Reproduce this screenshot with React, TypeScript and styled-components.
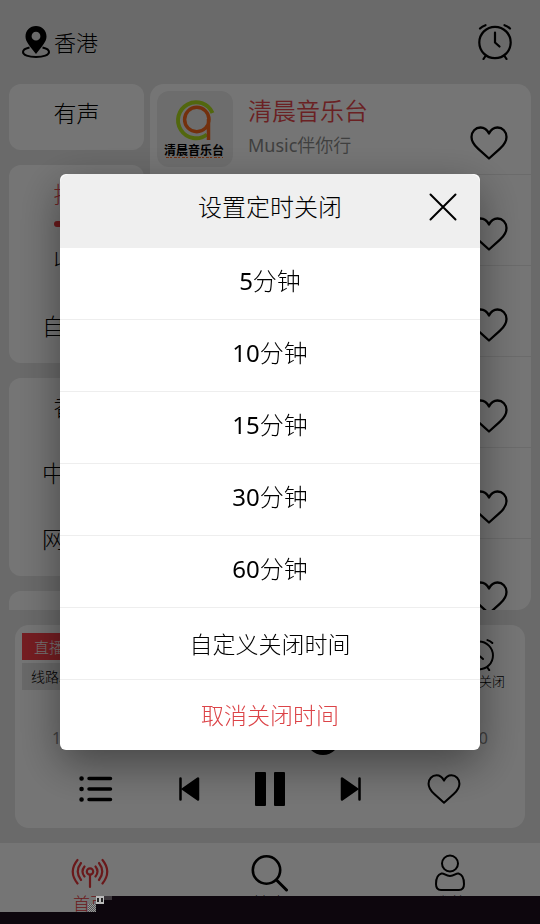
import React from "react";
import styled, { createGlobalStyle, css } from "styled-components";

const GlobalStyle = createGlobalStyle`
  * { box-sizing: border-box; }
  body {
    margin: 0;
    background: #e7e7e7;
    color: #000;
    font-family: "Noto Sans", "Noto Sans CJK SC", sans-serif;
    font-weight: 300;
  }
  button, input { font: inherit; color: inherit; }
  button { border: 0; padding: 0; background: none; cursor: pointer; }
  svg { display: block; }
`;

const Page = styled.div`
  display: flex;
  flex-direction: column;
  height: 100vh;
  overflow: hidden;
`;

const Header = styled.header`
  display: flex;
  flex: none;
  justify-content: space-between;
  align-items: center;
  height: 84px;
  padding: 0 27px 0 21px;
`;

const City = styled.button`
  display: flex;
  align-items: center;
  gap: 3px;
  font-size: 22px;
  line-height: 30px;
`;

const IconButton = styled.button`
  display: grid;
  place-items: center;
  flex: none;
`;

const Main = styled.main`
  display: flex;
  flex: 1 1 0;
  gap: 6px;
  min-height: 0;
  overflow: hidden;
  padding: 0 9px;
`;

const Categories = styled.nav`
  display: flex;
  flex: none;
  flex-direction: column;
  gap: 15px;
  width: 135px;
`;

const Group = styled.div`
  flex: none;
  min-height: 66px;
  overflow: hidden;
  border-radius: 12px;
  background: #fff;
`;

const Category = styled.button<{ $active?: boolean }>`
  display: flex;
  flex-direction: column;
  align-items: center;
  width: 100%;
  height: 66px;
  padding-top: 13px;
  font-size: 23px;
  line-height: 32px;
  color: ${(p) => (p.$active ? "#e8484c" : "#000")};
  ${(p) =>
    p.$active &&
    css`
      &::after {
        content: "";
        width: 46px;
        height: 6px;
        margin-top: 11px;
        border-radius: 3px;
        background: #e8383c;
      }
    `}
`;

const Stations = styled.ul`
  flex: 1;
  min-width: 0;
  margin: 0;
  padding: 0;
  overflow: hidden;
  list-style: none;
  border-radius: 14px;
  background: #fff;
`;

const Station = styled.li`
  display: flex;
  align-items: center;
  gap: 15px;
  height: 91px;
  padding: 0 23px 0 7px;
  border-bottom: 1px solid #e9e9e9;
`;

const Cover = styled.div`
  flex: none;
  width: 76px;
  height: 76px;
  overflow: hidden;
  border-radius: 12px;
  background: #eee;
`;

const StationText = styled.div`
  flex: 1;
  min-width: 0;
  padding-bottom: 7px;
  font-size: 18px;
  font-weight: 350;
  line-height: 24px;
  color: #8a8a8a;
`;

const StationName = styled.div`
  margin-bottom: 6px;
  font-size: 24px;
  line-height: 32px;
  color: #e8484c;
`;

const Latin = styled.span`
  font-weight: 400;
`;

const Like = styled(IconButton)`
  padding-top: 28px;
`;

const Player = styled.section`
  flex: none;
  margin: 15px;
  padding: 8px 7px 21px;
  border-radius: 14px;
  background: #fff;
`;

const PlayerTop = styled.div`
  display: flex;
  justify-content: space-between;
  height: 88px;
`;

const Tags = styled.div`
  display: grid;
  align-content: start;
  gap: 3px;
`;

const Tag = styled.button<{ $live?: boolean }>`
  width: 54px;
  height: 27px;
  font-size: ${(p) => (p.$live ? "15px" : "14px")};
  line-height: 26px;
  color: ${(p) => (p.$live ? "#fff" : "#000")};
  background: ${(p) => (p.$live ? "#ff404a" : "#e4e4e4")};
`;

const TimerButton = styled.button`
  display: flex;
  flex-direction: column;
  align-items: center;
  padding: 6px 13px 0 0;
  font-size: 13px;
  line-height: 20px;
`;

const Progress = styled.div`
  display: flex;
  align-items: center;
  gap: 12px;
  height: 34px;
  padding: 0 30px;
  font-size: 16px;
  font-weight: 400;
  color: #8a8a8a;
`;

const Seek = styled.input`
  flex: 1;
  min-width: 0;
  height: 4px;
  margin: 0;
  appearance: none;
  background: #ccc;
  &::-webkit-slider-thumb {
    appearance: none;
    width: 34px;
    height: 34px;
    border-radius: 50%;
    background: #000;
  }
`;

const Controls = styled.div`
  display: flex;
  justify-content: space-between;
  align-items: center;
  height: 36px;
  margin-top: 16px;
  padding: 0 57px;
`;

const Transport = styled.div`
  display: flex;
  align-items: center;
  gap: 55px;
`;

const TabBar = styled.nav`
  display: grid;
  flex: none;
  grid-template-columns: repeat(3, 1fr);
  height: 81px;
  background: #fff;
`;

const Tab = styled.a<{ $active?: boolean }>`
  display: flex;
  flex-direction: column;
  align-items: center;
  padding-top: 11px;
  font-size: 17px;
  line-height: 24px;
  text-decoration: none;
  color: ${(p) => (p.$active ? "#e8383c" : "#000")};
`;

const Backdrop = styled.div`
  position: fixed;
  inset: 0;
  display: grid;
  align-items: center;
  padding: 0 60px;
  background: rgba(0, 0, 0, 0.54);
`;

const Dialog = styled.div`
  overflow: hidden;
  border-radius: 6px;
  background: #fff;
  box-shadow: 0 14px 44px rgba(0, 0, 0, 0.42);
`;

const DialogHeader = styled.div`
  display: grid;
  grid-template-columns: 1fr auto 1fr;
  align-items: center;
  height: 74px;
  padding: 0 23px 8px;
  border-radius: 9px 9px 0 0;
  background: #efefef;
`;

const DialogTitle = styled.h2`
  grid-column: 2;
  margin: 0;
  font-size: 24px;
  font-weight: 300;
  line-height: 32px;
`;

const Close = styled(IconButton)`
  justify-self: end;
`;

const Option = styled.button<{ $kind?: "custom" | "cancel" }>`
  display: block;
  width: 100%;
  height: 72px;
  padding-bottom: ${(p) => (p.$kind ? "0" : "5px")};
  border-bottom: 1px solid #eee;
  font-size: ${(p) => (p.$kind ? "23px" : "24px")};
  line-height: 32px;
  color: ${(p) => (p.$kind === "cancel" ? "#dc4448" : "#000")};
  &:last-child {
    height: 70px;
    border-bottom: 0;
  }
`;

const Glitch = styled.div`
  position: fixed;
  right: 0;
  bottom: 0;
  left: 0;
  display: flex;
  align-items: flex-end;
  pointer-events: none;
`;

const GlitchBar = styled.div<{ $low?: boolean }>`
  flex: ${(p) => (p.$low ? "0 0 96px" : "1")};
  height: ${(p) => (p.$low ? "12px" : "28px")};
  background: #0d060d;
`;

const GlitchNoise = styled.svg`
  position: absolute;
  left: 88px;
  bottom: 12px;
`;

const Heart = ({ width = 38, height = 34 }: { width?: number; height?: number }) => (
  <svg width={width} height={height} viewBox="0 0 38 34" fill="none" stroke="#000" strokeWidth="2.3" strokeLinejoin="round">
    <path d="M19 7.500C17 3.500 13.800 1.500 10.500 1.500C5.500 1.500 1.500 5.500 1.500 11C1.500 16 4 19 8 22.700L19 32.500L30 22.700C34 19 36.500 16 36.500 11C36.500 5.500 32.500 1.500 27.500 1.500C24.200 1.500 21 3.500 19 7.500Z" />
  </svg>
);

const Alarm = ({ size = 36 }: { size?: number }) => (
  <svg width={size} height={size} viewBox="0 0 36 36" fill="none" stroke="#000" strokeWidth="2.2" strokeLinecap="round" strokeLinejoin="round">
    <circle cx="18" cy="18.500" r="15.700" />
    <path d="M18 8.500V18.500L22.500 22.500M3 4.500C4.500 3 6 2 8.500 1.200M33 4.500C31.500 3 30 2 27.500 1.200M8.500 32L6.500 35M27.500 32L29.500 35" />
  </svg>
);

const Pin = () => (
  <svg width="30" height="34" viewBox="0 0 30 34">
    <path fill="#000" fillRule="evenodd" d="M15 1C9 1 4.500 5.500 4.500 11.500C4.500 17 9 21 15 29C21 21 25.500 17 25.500 11.500C25.500 5.500 21 1 15 1ZM15 6.800A4.400 4.400 0 1 1 15 15.600A4.400 4.400 0 1 1 15 6.800Z" />
    <path fill="none" stroke="#000" strokeWidth="2" d="M8.500 22.500C4.500 23.300 2 25 2 27C2 30 7.500 32 15 32S28 30 28 27C28 25 25.500 23.300 21.500 22.500" />
  </svg>
);

const Skip = ({ next = false }: { next?: boolean }) => (
  <svg width="22" height="26" viewBox="0 0 22 26" fill="#000" stroke="#000" strokeLinecap="round" strokeLinejoin="round">
    {next ? (
      <path d="M2 2.500V23.500L17 13ZM19.500 2.500V23.500" strokeWidth="2.500" />
    ) : (
      <path d="M20 2.500V23.500L5 13ZM2.500 2.500V23.500" strokeWidth="2.500" />
    )}
  </svg>
);

const StationLogo = () => (
  <svg width="76" height="76" viewBox="0 0 76 76">
    <path fill="none" stroke="#b2e020" strokeWidth="4" d="M55.500 22A18 18 0 1 0 50 43.500" />
    <path fill="none" stroke="#fa6a1e" strokeWidth="3.500" d="M51.500 28V49M52 28.500A12.200 12.200 0 1 1 27.600 28.500A12.200 12.200 0 1 1 52 28.500Z" />
    <text x="37" y="64" textAnchor="middle" fontSize="12" fontWeight="700" fontFamily="Noto Sans CJK SC, sans-serif" fill="#000">清晨音乐台</text>
    <path stroke="#fa6a1e" strokeWidth="1" strokeDasharray="3 1 2 2" d="M9 66.500H66" />
  </svg>
);

const groups = [
  { id: "audio", names: ["有声"] },
  { id: "mine", names: ["推荐", "收藏", "自定义"] },
  { id: "region", names: ["香港", "中央台", "网络台"] },
  { id: "more", names: [] as string[] },
];
const minutes = [5, 10, 15, 30, 60];

export default function App() {
  return (
    <>
      <GlobalStyle />
      <Page>
        <Header>
          <City><Pin />香港</City>
          <IconButton aria-label="定时"><Alarm /></IconButton>
        </Header>
        <Main>
          <Categories>
            {groups.map((group) => (
              <Group key={group.id}>
                {group.names.map((name) => (
                  <Category key={name} $active={name === "推荐"}>{name}</Category>
                ))}
              </Group>
            ))}
          </Categories>
          <Stations>
            {[0, 1, 2, 3, 4, 5].map((i) => (
              <Station key={i}>
                {i === 0 ? (
                  <>
                    <Cover><StationLogo /></Cover>
                    <StationText>
                      <StationName>清晨音乐台</StationName>
                      <Latin>Music</Latin>伴你行
                    </StationText>
                  </>
                ) : (
                  <StationText />
                )}
                <Like aria-label="喜欢"><Heart /></Like>
              </Station>
            ))}
          </Stations>
        </Main>
        <Player>
          <PlayerTop>
            <Tags>
              <Tag $live>直播</Tag>
              <Tag>线路2</Tag>
            </Tags>
            <TimerButton><Alarm size={32} />定时关闭</TimerButton>
          </PlayerTop>
          <Progress>
            <span>10:00</span>
            <Seek type="range" aria-label="进度" defaultValue="68" />
            <span>12:00</span>
          </Progress>
          <Controls>
            <IconButton aria-label="列表">
              <svg width="34" height="28" viewBox="0 0 34 28" fill="none" stroke="#000" strokeLinecap="round">
                <path strokeWidth="3.500" d="M10 3.500H31.500M10 14H31.500M10 24.500H31.500" />
                <path strokeWidth="4.500" d="M2.500 3.500H2.600M2.500 14H2.600M2.500 24.500H2.600" />
              </svg>
            </IconButton>
            <Transport>
              <IconButton aria-label="上一个"><Skip /></IconButton>
              <IconButton aria-label="暂停">
                <svg width="30" height="36" viewBox="0 0 30 36">
                  <rect x="0" y="1" width="11" height="34" rx="1" />
                  <rect x="19" y="1" width="11" height="34" rx="1" />
                </svg>
              </IconButton>
              <IconButton aria-label="下一个"><Skip next /></IconButton>
            </Transport>
            <IconButton aria-label="喜欢"><Heart width={34} height={30} /></IconButton>
          </Controls>
        </Player>
        <TabBar>
          <Tab href="#home" $active>
            <svg width="38" height="38" viewBox="0 0 38 38" fill="none" stroke="currentColor" strokeWidth="2.200" strokeLinecap="round">
              <circle cx="19" cy="17.500" r="3.200" />
              <path d="M19 21V33M13.500 12.500Q9.500 17.500 13.500 22.500M24.500 12.500Q28.500 17.500 24.500 22.500M10 9Q3.500 17.500 10 26M28 9Q34.500 17.500 28 26M6.500 6Q-3 17.500 6.500 29.500M31.500 6Q41 17.500 31.500 29.500" />
            </svg>
            首页
          </Tab>
          <Tab href="#search">
            <svg width="38" height="38" viewBox="0 0 38 38" fill="none" stroke="#000" strokeLinecap="round">
              <circle cx="15.500" cy="16" r="13.700" strokeWidth="2.600" />
              <path strokeWidth="3" d="M25.500 26L35.500 36" />
            </svg>
            搜索
          </Tab>
          <Tab href="#me">
            <svg width="38" height="38" viewBox="0 0 38 38" fill="none" stroke="#000" strokeWidth="2" strokeLinejoin="round">
              <circle cx="19" cy="9.500" r="8" />
              <path d="M10.500 19.500C7 20.500 5 25 5 30C5 34.500 7 36 10 36H28C31 36 33 34.500 33 30C33 25 31 20.500 27.500 19.500C25 18.800 23.500 22 19 22S13 18.800 10.500 19.500Z" />
            </svg>
            我的
          </Tab>
        </TabBar>
      </Page>
      <Backdrop>
        <Dialog role="dialog" aria-modal="true" aria-labelledby="timer-title">
          <DialogHeader>
            <DialogTitle id="timer-title">设置定时关闭</DialogTitle>
            <Close aria-label="关闭">
              <svg width="28" height="28" viewBox="0 0 28 28" stroke="#000" strokeWidth="2" strokeLinecap="round">
                <path d="M1.500 1.500L26.500 26.500M26.500 1.500L1.500 26.500" />
              </svg>
            </Close>
          </DialogHeader>
          {minutes.map((m) => (
            <Option key={m}><Latin>{m}</Latin>分钟</Option>
          ))}
          <Option $kind="custom">自定义关闭时间</Option>
          <Option $kind="cancel">取消关闭时间</Option>
        </Dialog>
      </Backdrop>
      <Glitch aria-hidden="true">
        <GlitchBar $low />
        <GlitchBar />
        <GlitchNoise width="24" height="16" viewBox="0 0 24 16">
          <path fill="#555" d="M0 8H8V16H0Z" />
          <path stroke="#999" strokeDasharray="1 1" d="M0 8.500H8M1 9.500H8M0 10.500H8M1 11.500H8M0 12.500H8M1 13.500H8M0 14.500H8M1 15.500H8" />
          <path fill="#bbb" d="M8 0H16V8H8Z" />
          <path fill="#222" d="M9 2H11V6H9ZM13 2H15V6H13Z" />
          <path fill="#3a353a" d="M16 0H24V4H16Z" />
        </GlitchNoise>
      </Glitch>
    </>
  );
}
